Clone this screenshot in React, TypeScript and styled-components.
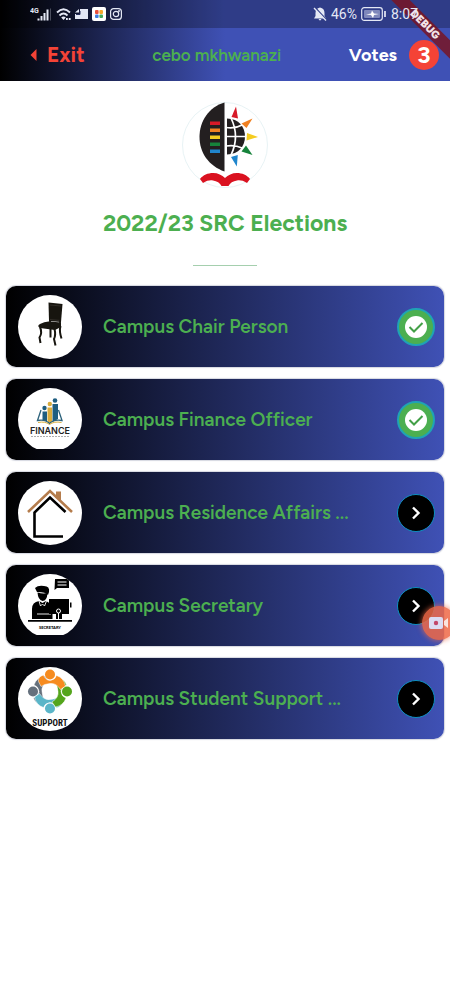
import React from "react";
import styled, { createGlobalStyle, css } from "styled-components";

const GlobalStyle = createGlobalStyle`
  * { box-sizing: border-box; }
  body {
    margin: 0;
    background: #fff;
    font-family: Figtree, Lato, "Open Sans", sans-serif;
    overflow-x: hidden;
  }
  svg { display: block; flex: none; }
`;

const Screen = styled.div`
  position: relative;
  min-height: 100vh;
  overflow: hidden;
`;

const Header = styled.header`
  background: linear-gradient(to right, #000 0%, #3f51b5 50%);
`;

const StatusBar = styled.div`
  height: 28px;
  padding: 0 32px 0 30px;
  display: flex;
  align-items: center;
  justify-content: space-between;
  background: rgba(0, 0, 0, 0.25);
  color: #e4e8f5;
  font-family: Roboto, sans-serif;
  font-size: 14px;
`;

const StatusGroup = styled.div`
  position: relative;
  z-index: 2;
  display: flex;
  align-items: center;
  gap: 4px;
`;

const Toolbar = styled.div`
  height: 53px;
  padding: 0 11px 0 29px;
  display: flex;
  align-items: center;
  justify-content: space-between;
`;

const ExitButton = styled.button`
  display: flex;
  align-items: center;
  gap: 9px;
  padding: 0;
  border: 0;
  background: none;
  color: #f44336;
  font: inherit;
  font-size: 21px;
  font-weight: 700;
`;

const UserName = styled.span`
  color: #4caf50;
  font-size: 17px;
  font-weight: 650;
`;

const Votes = styled.div`
  display: flex;
  align-items: center;
  gap: 12px;
  color: #fff;
  font-size: 18px;
  font-weight: 700;
`;

const VoteCount = styled.span`
  width: 30px;
  height: 30px;
  border-radius: 50%;
  display: grid;
  place-items: center;
  background: #f44336;
  font-size: 24px;
`;

const RibbonCorner = styled.div`
  position: absolute;
  top: 0;
  right: 0;
  width: 60px;
  height: 60px;
  overflow: hidden;
  pointer-events: none;
`;

const Ribbon = styled.div`
  position: absolute;
  top: 18px;
  right: -30px;
  width: 110px;
  height: 13px;
  display: grid;
  place-items: center;
  transform: rotate(45deg);
  background: rgba(120, 20, 35, 0.84);
  color: #f3e4e8;
  font-size: 11px;
  line-height: 13px;
  font-weight: 900;
`;

const Intro = styled.section`
  padding: 20px 0;
  display: flex;
  flex-direction: column;
  align-items: center;
`;

const Heading = styled.h1`
  margin: 19px 0 27px;
  color: #4caf50;
  font-size: 23px;
  line-height: 30px;
  font-weight: 700;
`;

const Divider = styled.hr`
  width: 64px;
  height: 1px;
  margin: 0;
  border: 0;
  background: #a5cfae;
`;

const Positions = styled.ul`
  margin: 0;
  padding: 0 6px;
  list-style: none;
  display: grid;
  gap: 12px;
`;

const Card = styled.li`
  height: 81px;
  padding: 0 9px 0 12px;
  display: flex;
  align-items: center;
  border-radius: 10px;
  background: linear-gradient(to right, #000, #3f51b5);
  box-shadow: 0 0 1px 1px #d5d7e0;
`;

const Avatar = styled.div<{ $flat: boolean }>`
  width: 64px;
  height: 64px;
  flex: none;
  border-radius: 50%;
  overflow: hidden;
  background: ${(p) =>
    p.$flat ? "linear-gradient(#fff 61px, transparent 61px)" : "#fff"};
`;

const Title = styled.span`
  flex: 1;
  min-width: 0;
  padding-left: 21px;
  white-space: nowrap;
  color: #4caf50;
  font-size: 19px;
  font-weight: 650;
`;

const StateButton = styled.button<{ $done: boolean }>`
  width: 38px;
  height: 38px;
  flex: none;
  padding: 0;
  border-radius: 50%;
  display: grid;
  place-items: center;
  ${(p) =>
    p.$done
      ? css`
          border: 2px solid #1fa3b5;
          background: #4caf50;
        `
      : css`
          border: 1px solid #0d8fc0;
          background: #000;
        `}
`;

const RecorderBubble = styled.button`
  position: absolute;
  top: 606px;
  right: -6px;
  width: 34px;
  height: 34px;
  padding: 0 0 0 6px;
  border: 0;
  border-radius: 50%;
  display: flex;
  align-items: center;
  background: rgba(238, 105, 70, 0.85);
  box-shadow: 0 0 5px 1px rgba(240, 110, 75, 0.6);
`;

const SignalIcon = () => (
  <svg width="22" height="16" viewBox="0 0 22 16" fill="#e4e8f5">
    <text x="0" y="7" fontSize="7" fontWeight="700">4G</text>
    <path d="M7.500 12.500h2v2h-2zM10.500 10h2v4.500h-2zM13.500 7h2v7.500h-2zM16.500 3.500h2v11h-2z" />
    <path d="M20 2.500h1v12h-1z" opacity=".3" />
  </svg>
);

const WifiIcon = () => (
  <svg width="15" height="14" viewBox="0 0 15 14" fill="none" stroke="#e4e8f5" strokeWidth="1.800">
    <path d="M1 5.500Q7.500-1 14 5.500M3.500 8.500Q7.500 4.500 11.500 8.500" />
    <path d="M5.200 10.500Q7.500 8.500 9.800 10.500L7.500 13z" fill="#e4e8f5" stroke="none" />
    <path d="M10 12h1.800M12.800 12h1.800" strokeWidth="2" />
  </svg>
);

const CardIcon = () => (
  <svg width="13" height="12" viewBox="0 0 13 12">
    <path d="M5 1h8v10H0V6h5z" fill="#e4e8f5" />
    <path d="M0 4.500L4 1v3.500z" fill="#e4e8f5" />
    <path d="M5 3v3.500H1" fill="none" stroke="#252d5c" />
  </svg>
);

const AppIcon = () => (
  <svg width="14" height="14" viewBox="0 0 14 14">
    <rect width="14" height="14" rx="2" fill="#fff" />
    <rect x="3" y="3" width="3.600" height="4" rx="1" fill="#e8503c" />
    <rect x="7.400" y="3" width="3.600" height="4" rx="1" fill="#f4a62a" />
    <rect x="3" y="7.500" width="3.600" height="3.600" rx="1" fill="#3f7de0" />
    <rect x="7.400" y="7.500" width="3.600" height="3.600" rx="1" fill="#43a85a" />
  </svg>
);

const CameraIcon = () => (
  <svg width="12" height="12" viewBox="0 0 12 12" fill="none" stroke="#e4e8f5" strokeWidth="1.200">
    <rect x=".6" y=".6" width="10.800" height="10.800" rx="3" />
    <circle cx="6" cy="6" r="2.700" />
    <circle cx="9" cy="3" r=".4" />
  </svg>
);

const MutedBellIcon = () => (
  <svg width="14" height="14" viewBox="0 0 14 14">
    <path d="M7 .500C10 1 11.500 3 11.500 6v3l1.500 2.500H1L2.500 9V6C2.500 3 4 1 7 .500zM5.500 12h3L7 13.800z" fill="#e4e8f5" />
    <path d="M2.500 1l11 12" stroke="#2f3d88" strokeWidth="1.600" />
    <path d="M1 1l12 12.500" stroke="#e4e8f5" strokeWidth="1.300" />
  </svg>
);

const BatteryIcon = () => (
  <svg width="26" height="14" viewBox="0 0 26 14" fill="none" stroke="#e4e8f5">
    <rect x=".7" y=".7" width="20.600" height="12.600" rx="2.500" strokeWidth="1.200" />
    <rect x="3" y="3" width="16" height="8" rx="1" fill="#7f88bb" stroke="none" />
    <path d="M5 7.500l5-1 1-3 2 3 5 .5-5 1-1 3-2-3z" fill="#fff" stroke="none" />
    <path d="M24 4v6" strokeWidth="1.700" />
  </svg>
);

const Crest = () => (
  <svg width="88" height="88" viewBox="0 0 88 88" role="img" aria-label="University crest">
    <circle cx="44" cy="44" r="42.500" fill="#fff" stroke="#e8f3f5" />
    <path d="M43.500 1.500C28 6 18.500 20 18.500 36S28 65 43.500 70.500z" fill="#231f20" />
    <path d="M29 20.500h10v3.500H29z" fill="#d71a28" />
    <path d="M29 27.500h10v3.500H29z" fill="#f08022" />
    <path d="M29 34.500h10v3.500H29z" fill="#f5cc20" />
    <path d="M29 41.500h10v3.500H29z" fill="#16833b" />
    <path d="M29 48.500h10v3.500H29z" fill="#2086cd" />
    <path d="M46 17.500C58 17.500 64 26 64 35.500S58 53.500 46 53.500z" fill="#231f20" />
    <path d="M45 26.500Q54 28 61 24M45 35.500H65M45 45Q54 43.500 61 47M50 17Q59 35.500 50 54" fill="none" stroke="#fff" strokeWidth="1.700" />
    <path d="M50.500 16L55 5.500 57 17.500z" fill="#d71a28" />
    <path d="M60.500 22.500L71.500 17.500 65.500 27z" fill="#f08022" />
    <path d="M66 32L77 36 65.500 39.500z" fill="#f5cc20" />
    <path d="M65 44.500L71.500 54 60.500 50.500z" fill="#16833b" />
    <path d="M50 56L56.800 54 55.800 65.500z" fill="#2086cd" />
    <path d="M19 78C22 74 27 72 32 72 37 72 41 74 44 77 47 74 51 72 56 72 61 72 66 74 69 78L66 82C62 79.500 59 79 56 79.500 52 80 49 82 47.500 85H40.500C39 82 36 80 32 79.500 29 79 26 79.500 22 82z" fill="#da1220" />
  </svg>
);

const ChairArt = () => (
  <svg width="64" height="64" viewBox="0 0 64 64" fill="#17150f" stroke="#17150f">
    <path d="M30.500 7.500L44.500 9 43 27 31 26z" stroke="none" />
    <path d="M32 10L43 11M32 24.500L43 25.500" stroke="#4a4740" strokeWidth=".5" />
    <path d="M32 25v4M42 25v5" strokeWidth="1.800" />
    <path d="M22 29Q27 26 32 26.500L43 27.500 43 32 37 35 22 33Q18.500 31 22 29z" stroke="none" />
    <path d="M22 32Q24.500 38 21.500 42.500L22.500 48M36.500 34Q38 40 36 44L37.500 50.500M42.500 31Q41 36 43.500 43.500M32.500 34V42.500" fill="none" strokeWidth="2" />
  </svg>
);

const FinanceArt = () => (
  <svg width="64" height="64" viewBox="0 0 64 64">
    <g fill="#1e5d80">
      <circle cx="26.500" cy="20" r="2.200" />
      <path d="M24.500 23.500h4.500V33.500l-4.500-1.500z" />
      <circle cx="37" cy="12.500" r="2.300" />
      <path d="M34.500 16h5.500v15l-5.500 3z" />
    </g>
    <g fill="#d9ac3d">
      <circle cx="31.800" cy="16" r="2.200" />
      <path d="M29.500 19.500h4.600v14l-2.300 1.500-2.300-1.500z" />
    </g>
    <path d="M23 22L19.500 32.500Q27 31 31.500 35.500 36 31 44 32.500L40.500 22" fill="none" stroke="#2e637c" strokeWidth="1.300" />
    <path d="M20 34.500Q27 33 31.500 36.500 36 33 43.500 34.500" fill="none" stroke="#d9ac3d" />
    <text x="32" y="45.500" textAnchor="middle" fontFamily="Inter, sans-serif" fontSize="9" fontWeight="600" fill="#222">FINANCE</text>
    <path d="M13 48.500h39" stroke="#999" strokeWidth=".8" strokeDasharray="2 1" />
  </svg>
);

const HouseArt = () => (
  <svg width="64" height="64" viewBox="0 0 64 64" fill="none">
    <path d="M38 10.500h5v9l-5-4.500z" fill="#b57d4d" />
    <path d="M10 31L32 10 54 31" stroke="#b57d4d" strokeWidth="2.600" />
    <path d="M47.500 31L32 16.500 16.500 31.500V55.500H45" stroke="#000" strokeWidth="2.600" />
  </svg>
);

const SecretaryArt = () => (
  <svg width="64" height="64" viewBox="0 0 64 64" fill="#000">
    <path d="M37 5h14v9H39l-2.500 2z" />
    <path d="M39.500 8h9M39.500 11h9" stroke="#fff" />
    <path d="M17 14Q20 11 26 12 32 12 31 18L30 21Q28 18 19 18z" />
    <path d="M19.500 18.500Q25 20 29.500 19 29 27 24.500 27 20 26 19.500 18.500z" />
    <path d="M21 27L24.500 29 28 27Q34 29 34.500 39V45H14V35Q14 28 21 27z" />
    <path d="M21 27l1.500 5 2-2 2 2 2-5M19 40h14" fill="none" stroke="#fff" strokeWidth=".9" />
    <path d="M31 25h20v15H44V45H38V40H31z" />
    <path d="M52 28.500h1.500v5H52z" />
    <circle cx="40.500" cy="37" r="2" fill="none" stroke="#fff" />
    <path d="M40.500 39v6" stroke="#fff" />
    <path d="M10 46h44v1.800H10z" />
    <text x="32" y="55" textAnchor="middle" fontFamily="Lato, sans-serif" fontSize="4" fontWeight="900">SECRETARY</text>
  </svg>
);

const supporters = [
  { color: "#65707c", turn: 270 },
  { color: "#5ab5c8", turn: 180 },
  { color: "#54a51c", turn: 90 },
  { color: "#f68b1f", turn: 0 },
];

const SupportArt = () => (
  <svg width="64" height="64" viewBox="0 0 64 64">
    {supporters.map((s) => (
      <g key={s.turn} transform={`rotate(${s.turn} 32 24.500)`} fill={s.color}>
        <path d="M20.500 14.500Q19.500 10 25.500 8 27 13 32 13.500 37 13 38.500 8.500Q46 11 47.500 19L42.500 22.500Q38 15.500 32 16.500 26 17 23 19.500z" stroke="#fff" strokeWidth=".5" />
        <circle cx="32" cy="7.500" r="5" />
      </g>
    ))}
    <text x="32" y="58.500" textAnchor="middle" fontFamily="'Liberation Sans Narrow', 'Roboto Condensed', sans-serif" fontSize="9" fontWeight="700" fill="#111">SUPPORT</text>
  </svg>
);

const CheckMark = () => (
  <svg width="22" height="22" viewBox="0 0 22 22" fill="none">
    <circle cx="11" cy="11" r="11" fill="#fff" />
    <path d="M4.500 11L9 15.500 17.500 7" stroke="#43a047" strokeWidth="2" />
  </svg>
);

const Chevron = () => (
  <svg width="12" height="14" viewBox="0 0 12 14" fill="none">
    <path d="M3 1.500L8.500 7 3 12.500" stroke="#fff" strokeWidth="2.400" />
  </svg>
);

const positions = [
  { title: "Campus Chair Person", art: <ChairArt />, flat: false, done: true },
  { title: "Campus Finance Officer", art: <FinanceArt />, flat: true, done: true },
  { title: "Campus Residence Affairs ...", art: <HouseArt />, flat: false, done: false },
  { title: "Campus Secretary", art: <SecretaryArt />, flat: true, done: false },
  { title: "Campus Student Support ...", art: <SupportArt />, flat: false, done: false },
];

export default function App() {
  return (
    <Screen>
      <GlobalStyle />
      <Header>
        <StatusBar>
          <StatusGroup>
            <SignalIcon />
            <WifiIcon />
            <CardIcon />
            <AppIcon />
            <CameraIcon />
          </StatusGroup>
          <StatusGroup>
            <MutedBellIcon />
            <span>46%</span>
            <BatteryIcon />
            <span>8:07</span>
          </StatusGroup>
        </StatusBar>
        <Toolbar>
          <ExitButton type="button">
            <svg width="9" height="12" viewBox="0 0 9 12" fill="#f44336">
              <path d="M7.500 0v12L1.500 6z" />
            </svg>
            Exit
          </ExitButton>
          <UserName>cebo mkhwanazi</UserName>
          <Votes>
            Votes
            <VoteCount>3</VoteCount>
          </Votes>
        </Toolbar>
      </Header>
      <main>
        <Intro>
          <Crest />
          <Heading>2022/23 SRC Elections</Heading>
          <Divider />
        </Intro>
        <Positions>
          {positions.map((p) => (
            <Card key={p.title}>
              <Avatar $flat={p.flat}>{p.art}</Avatar>
              <Title>{p.title}</Title>
              <StateButton type="button" $done={p.done} aria-label={p.title}>
                {p.done ? <CheckMark /> : <Chevron />}
              </StateButton>
            </Card>
          ))}
        </Positions>
      </main>
      <RecorderBubble type="button" aria-label="Record screen">
        <svg width="22" height="14" viewBox="0 0 22 14">
          <rect x="1" y="1" width="14" height="12" rx="2" fill="#dcdcf2" />
          <path d="M16 5l4-3v10l-4-3z" fill="#fbe3dc" />
          <circle cx="8" cy="7" r="2.200" fill="#c2476a" />
        </svg>
      </RecorderBubble>
      <RibbonCorner>
        <Ribbon>DEBUG</Ribbon>
      </RibbonCorner>
    </Screen>
  );
}
